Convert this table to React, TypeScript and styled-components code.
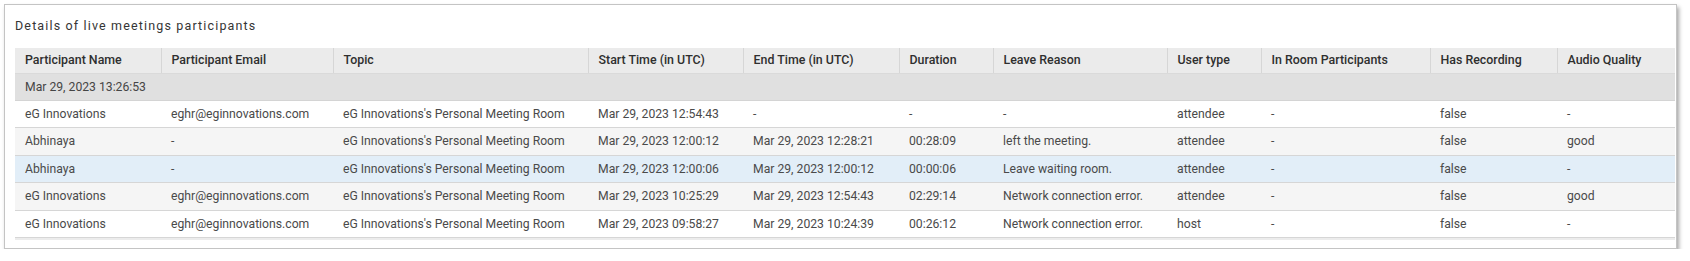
import React from "react";
import styled, { createGlobalStyle } from "styled-components";

const GlobalStyle = createGlobalStyle`
  body {
    margin: 0;
    background: #ffffff;
    font-family: Roboto, "Liberation Sans", Arial, sans-serif;
  }
`;

const Card = styled.div`
  box-sizing: border-box;
  width: 1673px;
  margin: 4px 0 0 4px;
  padding: 0 1px 0 10px;
  background: #fff;
  border: 1px solid #c4c4c4;
  box-shadow: 2px 3px 4px rgba(0, 0, 0, 0.35);
`;

const Title = styled.div`
  padding: 13px 0 14px;
  font-size: 12.5px;
  letter-spacing: 1.15px;
  line-height: 16px;
  color: #353535;
`;

const Table = styled.table`
  width: 1660px;
  table-layout: fixed;
  border-collapse: collapse;
  font-size: 12.2px;
  line-height: 16px;
`;

const Th = styled.th`
  height: 25px;
  padding: 0 10px;
  text-align: left;
  font-size: 12.4px;
  font-weight: 500;
  color: #2f2f2f;
  background: #ebebeb;
  border-left: 1px solid #d6d6d6;
  border-bottom: 1px solid #dadada;
  white-space: nowrap;
  box-sizing: border-box;
  &:first-child {
    border-left: none;
  }
`;

const GroupCell = styled.td`
  height: 27px;
  padding: 0 10px;
  background: #e0e0e0;
  color: #454545;
  border-bottom: 1px solid #d4d4d4;
  box-sizing: border-box;
`;

const Row = styled.tr<{ $bg: string }>`
  background: ${(p) => p.$bg};
`;

const Td = styled.td`
  height: 27.5px;
  padding: 0 10px;
  color: #4a4a4a;
  border-bottom: 1px solid #d6d6d6;
  white-space: nowrap;
  overflow: hidden;
  box-sizing: border-box;
`;

const Footer = styled.div`
  height: 8px;
  border-top: 2px solid #ececec;
`;

const widths = [146, 172, 255, 155, 156, 94, 174, 94, 169, 127, 118];

const headers = [
  "Participant Name",
  "Participant Email",
  "Topic",
  "Start Time (in UTC)",
  "End Time (in UTC)",
  "Duration",
  "Leave Reason",
  "User type",
  "In Room Participants",
  "Has Recording",
  "Audio Quality",
];

const room = "eG Innovations's Personal Meeting Room";

const rows: { bg: string; cells: string[] }[] = [
  {
    bg: "#ffffff",
    cells: ["eG Innovations", "eghr@eginnovations.com", room, "Mar 29, 2023 12:54:43", "-", "-", "-", "attendee", "-", "false", "-"],
  },
  {
    bg: "#f5f5f5",
    cells: ["Abhinaya", "-", room, "Mar 29, 2023 12:00:12", "Mar 29, 2023 12:28:21", "00:28:09", "left the meeting.", "attendee", "-", "false", "good"],
  },
  {
    bg: "#e2eef8",
    cells: ["Abhinaya", "-", room, "Mar 29, 2023 12:00:06", "Mar 29, 2023 12:00:12", "00:00:06", "Leave waiting room.", "attendee", "-", "false", "-"],
  },
  {
    bg: "#f5f5f5",
    cells: ["eG Innovations", "eghr@eginnovations.com", room, "Mar 29, 2023 10:25:29", "Mar 29, 2023 12:54:43", "02:29:14", "Network connection error.", "attendee", "-", "false", "good"],
  },
  {
    bg: "#ffffff",
    cells: ["eG Innovations", "eghr@eginnovations.com", room, "Mar 29, 2023 09:58:27", "Mar 29, 2023 10:24:39", "00:26:12", "Network connection error.", "host", "-", "false", "-"],
  },
];

export default function App() {
  return (
    <>
      <GlobalStyle />
      <Card>
        <Title>Details of live meetings participants</Title>
        <Table>
          <colgroup>
            {widths.map((w, i) => (
              <col key={i} style={{ width: w }} />
            ))}
          </colgroup>
          <thead>
            <tr>
              {headers.map((h) => (
                <Th key={h}>{h}</Th>
              ))}
            </tr>
          </thead>
          <tbody>
            <tr>
              <GroupCell colSpan={11}>Mar 29, 2023 13:26:53</GroupCell>
            </tr>
            {rows.map((r, i) => (
              <Row key={i} $bg={r.bg}>
                {r.cells.map((c, j) => (
                  <Td key={j}>{c}</Td>
                ))}
              </Row>
            ))}
          </tbody>
        </Table>
        <Footer />
      </Card>
    </>
  );
}
